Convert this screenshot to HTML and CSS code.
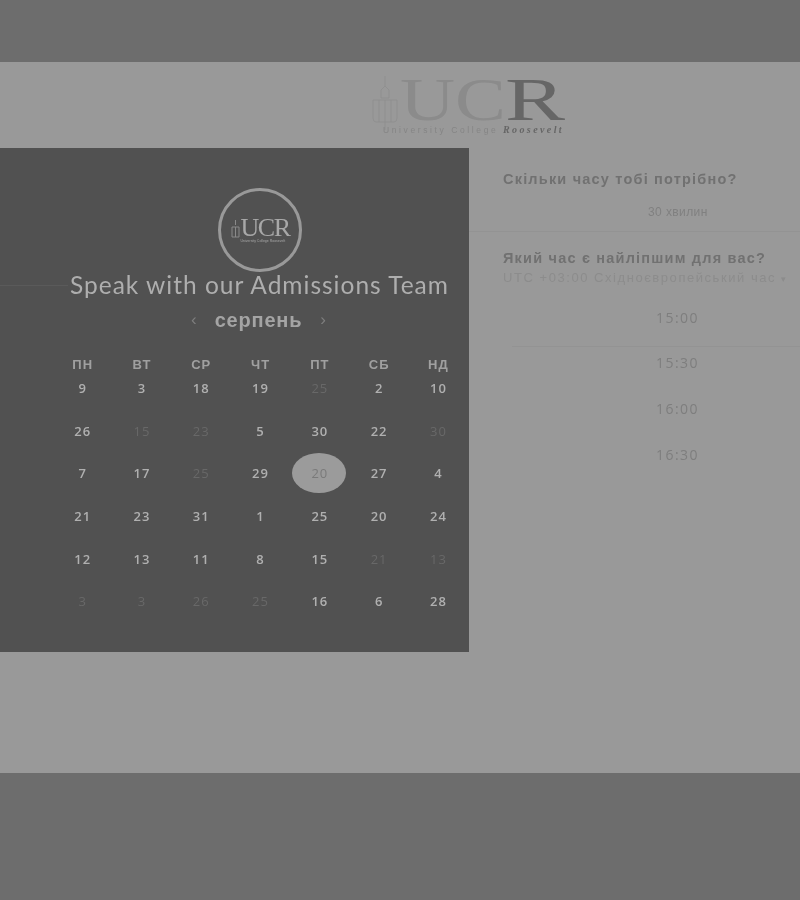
FILE: index.html
```html
<!DOCTYPE html>
<html lang="uk">
<head>
  <meta charset="UTF-8">
  <meta name="viewport" content="width=device-width, initial-scale=1">
  <title>Speak with our Admissions Team | UCR</title>
  <link rel="stylesheet" href="styles.css">
</head>
<body>

  <div class="card">
    <div class="brand">
      <svg class="brand-logo" width="200" height="70" viewBox="0 0 200 70">
        <!-- tower -->
        <g fill="none" stroke="#8e8e8e" stroke-width="0.8">
          <path d="M16 8 L16 18 M12 22 L16 18 L20 22 L20 30 L12 30 Z"/>
          <path d="M4 32 H28 V50 Q28 54 25 54 H7 Q4 54 4 50 Z"/>
          <path d="M10 32 V54 M16 32 V62 M22 32 V54"/>
        </g>
        <text class="logo-u" x="31" y="52" textLength="106" lengthAdjust="spacingAndGlyphs">UC</text>
        <text class="logo-r" x="136" y="52" textLength="60" lengthAdjust="spacingAndGlyphs">R</text>
        <text class="logo-sub" x="14" y="65">University College</text>
        <text class="logo-sub2" x="134" y="65">Roosevelt</text>
      </svg>
    </div>

    <div class="main">
      <div class="panel">
        <div class="seal">
          <svg class="seal-tower" width="9" height="18" viewBox="0 0 9 18">
            <path d="M4.5 0 V5 M1 7 H8 V17 H1 Z M4.5 7 V17" fill="none" stroke="#8a8a8a" stroke-width="1"/>
          </svg>
          <div>
            <div class="seal-name">UCR</div>
            <div class="seal-sub">University College Roosevelt</div>
          </div>
        </div>
        <h1 class="panel-title">Speak with our Admissions Team</h1>
        <div class="month-nav">
          <span class="month-arrow">&lsaquo;</span>
          <span class="month-name">серпень</span>
          <span class="month-arrow">&rsaquo;</span>
        </div>
        <div class="calendar">
          <div class="day-head">ПН</div>
          <div class="day-head">ВТ</div>
          <div class="day-head">СР</div>
          <div class="day-head">ЧТ</div>
          <div class="day-head">ПТ</div>
          <div class="day-head">СБ</div>
          <div class="day-head">НД</div>

          <div class="day">9</div>
          <div class="day">3</div>
          <div class="day">18</div>
          <div class="day">19</div>
          <div class="day off">25</div>
          <div class="day">2</div>
          <div class="day">10</div>

          <div class="day">26</div>
          <div class="day off">15</div>
          <div class="day off">23</div>
          <div class="day">5</div>
          <div class="day">30</div>
          <div class="day">22</div>
          <div class="day off">30</div>

          <div class="day">7</div>
          <div class="day">17</div>
          <div class="day off">25</div>
          <div class="day">29</div>
          <div class="day selected">20</div>
          <div class="day">27</div>
          <div class="day">4</div>

          <div class="day">21</div>
          <div class="day">23</div>
          <div class="day">31</div>
          <div class="day">1</div>
          <div class="day">25</div>
          <div class="day">20</div>
          <div class="day">24</div>

          <div class="day">12</div>
          <div class="day">13</div>
          <div class="day">11</div>
          <div class="day">8</div>
          <div class="day">15</div>
          <div class="day off">21</div>
          <div class="day off">13</div>

          <div class="day off">3</div>
          <div class="day off">3</div>
          <div class="day off">26</div>
          <div class="day off">25</div>
          <div class="day">16</div>
          <div class="day">6</div>
          <div class="day">28</div>
        </div>
      </div>

      <div class="side">
        <h2 class="side-title">Скільки часу тобі потрібно?</h2>
        <div class="duration">30 хвилин</div>
        <h2 class="side-title">Який час є найліпшим для вас?</h2>
        <div class="timezone">UTC +03:00 Східноєвропейський час <span class="tz-caret">&#9662;</span></div>
        <div class="slot slot-first">15:00</div>
        <div class="slot">15:30</div>
        <div class="slot">16:00</div>
        <div class="slot">16:30</div>
      </div>
    </div>
  </div>

</body>
</html>
```

FILE: styles.css
```css
body {
  margin: 0;
  height: 900px;
  overflow: hidden;
  background: #6d6d6d;
  font-family: 'Liberation Sans', Arial, sans-serif;
}
.card {
  margin-top: 62px;
  height: 711px;
  background: #999;
  filter: blur(0.5px);
}
.brand {
  height: 86px;
  display: flex;
  justify-content: center;
}
.brand-logo {
  margin: 6px 0 0 138px;
  overflow: visible;
}
.logo-u, .logo-r {
  font-family: 'Liberation Serif', serif;
  font-size: 62px;
}
.logo-u {
  fill: #8b8b8b;
}
.logo-r {
  fill: #666;
}
.logo-sub {
  font-family: 'Liberation Sans', sans-serif;
  font-size: 8.5px;
  letter-spacing: 2.6px;
  fill: #858585;
}
.logo-sub2 {
  font-family: 'Liberation Serif', serif;
  font-style: italic;
  font-weight: 700;
  font-size: 10px;
  letter-spacing: 2.4px;
  fill: #666;
}
.main {
  display: flex;
}
.panel {
  position: relative;
  width: 469px;
  height: 504px;
  box-sizing: border-box;
  padding-top: 40px;
  background: #515151;
  display: flex;
  flex-direction: column;
  align-items: flex-start;
}
.panel::before {
  content: "";
  position: absolute;
  left: 0;
  top: 137px;
  width: 68px;
  height: 1px;
  background: #5a5a5a;
}
.seal {
  width: 84px;
  height: 84px;
  box-sizing: border-box;
  margin-left: 218px;
  padding-bottom: 2px;
  border: 3px solid #999;
  border-radius: 50%;
  display: flex;
  align-items: center;
  justify-content: center;
  gap: 1px;
  color: #a8a8a8;
}
.seal-name {
  font-family: 'Liberation Serif', serif;
  font-size: 26px;
  line-height: 23px;
  letter-spacing: -1.5px;
}
.seal-sub {
  font-size: 3.5px;
  line-height: 4px;
  white-space: nowrap;
}
.panel-title {
  margin: 0 0 0 70px;
  font-family: Lato, sans-serif;
  font-weight: 400;
  font-size: 24.5px;
  line-height: 26px;
  letter-spacing: 1px;
  white-space: nowrap;
  color: #aeaeae;
}
.month-nav {
  margin: 9px 0 0 191px;
  height: 26px;
  display: flex;
  align-items: center;
  gap: 18px;
}
.month-name {
  font-size: 20px;
  font-weight: 700;
  letter-spacing: 0.8px;
  color: #a4a4a4;
}
.month-arrow {
  font-size: 17px;
  color: #7e7e7e;
}
.calendar {
  margin: 24px 0 0 53px;
  display: grid;
  grid-template-columns: repeat(7, 59.3px);
  grid-template-rows: 23px repeat(6, 42.7px);
  text-align: center;
}
.day-head {
  font-size: 13px;
  font-weight: 700;
  letter-spacing: 1px;
  color: #a0a0a0;
}
.day {
  font-family: 'Open Sans', sans-serif;
  font-size: 13px;
  font-weight: 600;
  line-height: 16px;
  letter-spacing: 1px;
  color: #b0b0b0;
}
.day.off {
  font-weight: 400;
  color: #686868;
}
.day.selected {
  position: relative;
  z-index: 0;
  font-weight: 400;
  color: #7a7a7a;
}
.day.selected::before {
  content: "";
  position: absolute;
  z-index: -1;
  left: 2px;
  top: -12px;
  width: 54px;
  height: 40px;
  border-radius: 50%;
  background: #9b9b9b;
}
.side {
  flex: 1;
  padding-top: 23px;
  box-sizing: border-box;
  height: 504px;
}
.side-title {
  margin: 0 0 0 34px;
  font-size: 14.5px;
  line-height: 16px;
  font-weight: 700;
  letter-spacing: 1.2px;
  white-space: nowrap;
  color: #717171;
}
.duration {
  height: 45px;
  padding-top: 19px;
  box-sizing: border-box;
  margin: 0 0 18px 0;
  padding-left: 179px;
  font-size: 12px;
  line-height: 12px;
  letter-spacing: 0.4px;
  color: #808080;
  border-bottom: 1px solid #939393;
}
.timezone {
  margin: 5px 0 0 34px;
  font-size: 13px;
  line-height: 14px;
  letter-spacing: 1.55px;
  white-space: nowrap;
  color: #8c8c8c;
}
.tz-caret {
  font-size: 9px;
  letter-spacing: 0;
}
.slot {
  height: 46px;
  line-height: 46px;
  text-align: center;
  padding-left: 43px;
  margin-left: 43px;
  box-sizing: border-box;
  font-family: 'Open Sans', sans-serif;
  font-size: 14px;
  letter-spacing: 1.5px;
  color: #7e7e7e;
}
.slot-first {
  margin-top: 9px;
  margin-bottom: -7px;
  height: 52px;
  border-bottom: 1px solid #939393;
}
```
